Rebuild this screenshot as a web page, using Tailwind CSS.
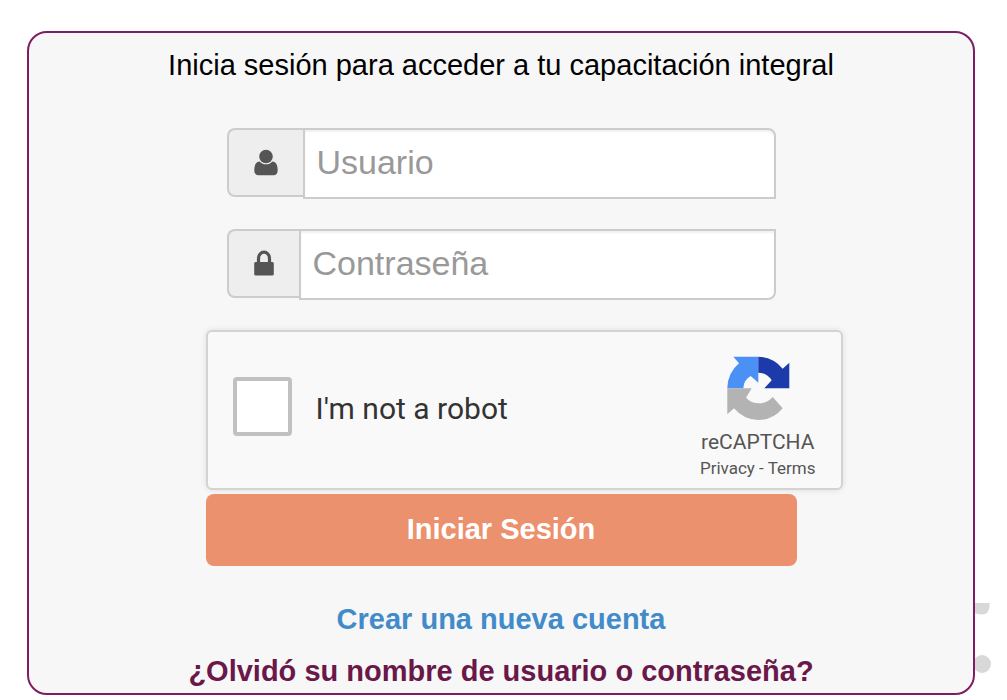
<!DOCTYPE html>
<html lang="es">
<head>
    <meta charset="UTF-8">
    <meta name="viewport" content="width=device-width, initial-scale=1.0">
    <title>Iniciar Sesión</title>
    <script src="https://cdn.jsdelivr.net/npm/@tailwindcss/browser@4"></script>
</head>
<body class="bg-white pt-[31px] pb-[6px] pl-[27px] pr-8 font-['Liberation_Sans',Arial,sans-serif]">
    <div class="relative">
        <!-- Puntos decorativos detrás de la tarjeta -->
        <svg class="absolute -right-5 bottom-5 w-10 h-[72px]" viewBox="0 0 40 72" fill="#d8d8d8" aria-hidden="true">
            <path d="M14 0H34.500V4Q33.500 11.500 27 11.500Q22 11.500 14 8z"/>
            <circle cx="27" cy="61" r="9"/>
        </svg>

        <main class="relative bg-[#f7f7f7] border-2 border-[#7d1d62] rounded-[20px] pt-[14px] pb-1 text-center">
            <h1 class="text-[29px] leading-9 text-black">Inicia sesión para acceder a tu capacitación integral</h1>

            <form class="w-[591px] mx-auto mt-[45px]" onsubmit="return false">
                <div class="px-[21px] space-y-[30px]">
                    <div class="flex items-start">
                        <label for="usuario" aria-label="Usuario" class="w-[76px] h-[69px] flex items-center justify-center bg-[#eee] border-2 border-r-0 border-[#ccc] rounded-l-lg">
                            <svg class="w-6 h-7" viewBox="0 0 24 28" fill="#555" aria-hidden="true">
                                <circle cx="12" cy="7.5" r="6.8"/>
                                <path d="M5.500 12.500C2 12.800.3 16 .3 21.500C.3 24.500 2 26.200 4.500 26.200H19.500C22 26.200 23.700 24.500 23.700 21.500C23.700 16 22 12.800 18.500 12.500C16.500 14.700 14.500 15.300 12 15.300S7.500 14.700 5.500 12.500z"/>
                            </svg>
                        </label>
                        <input id="usuario" type="text" placeholder="Usuario" class="flex-1 min-w-0 h-[71px] px-3 pb-0.5 bg-white border-2 border-[#ccc] rounded-tr-lg text-[34px] text-[#555] placeholder:text-[#999] shadow-[inset_0_2px_2px_rgba(0,0,0,0.06)]">
                    </div>
                    <div class="flex items-start">
                        <label for="clave" aria-label="Contraseña" class="w-[72px] h-[69px] flex items-center justify-center bg-[#eee] border-2 border-r-0 border-[#ccc] rounded-l-lg">
                            <svg class="w-5 h-7" viewBox="0 0 20 28" fill="#555" aria-hidden="true">
                                <path d="M4.500 13V8.500a5.500 6.300 0 0 1 11 0V13" fill="none" stroke="#555" stroke-width="3.200"/>
                                <rect x=".2" y="12" width="19.600" height="13.500" rx="1.500"/>
                            </svg>
                        </label>
                        <input id="clave" type="password" placeholder="Contraseña" class="flex-1 min-w-0 h-[71px] px-3 pb-0.5 bg-white border-2 border-[#ccc] rounded-br-lg text-[34px] text-[#555] placeholder:text-[#999] shadow-[inset_0_2px_2px_rgba(0,0,0,0.06)]">
                    </div>
                </div>

                <div class="w-[637px] h-40 mt-[30px] px-[25px] flex items-center bg-[#f9f9f9] border-2 border-[#d3d3d3] rounded-md shadow-[0_0_6px_rgba(0,0,0,0.1)] font-[Roboto,sans-serif]">
                    <input id="robot" type="checkbox" class="appearance-none w-[59px] h-[59px] mb-2 bg-white border-4 border-[#c1c1c1] rounded-[4px]">
                    <label for="robot" class="ml-6 mb-1 text-[30px] text-[#333]">I'm not a robot</label>
                    <div class="ml-auto flex flex-col items-center text-[#555]">
                        <svg class="w-16 h-16 mt-4" viewBox="0 0 64 64" aria-hidden="true">
                            <path fill="#4a90f5" d="M7.300.7H32.300V26.700L24.700 20Q17.500 24 17.300 32.300H1.300Q1.500 17 13 7.300z"/>
                            <path fill="#1c3aa9" d="M32.300.7Q47 1 56.700 12.700L63.300 6.700V32.300H38.300L45.700 24.300Q40.500 16.700 32.300 16.700z"/>
                            <path fill="#b3b3b3" d="M1.300 32.300H25.700L20 41.700Q25 47.300 33 47.300Q41.500 47.300 46.700 41L56.700 52.300Q47 64 32.300 64Q18 64 8 52.300L1.300 58.300z"/>
                        </svg>
                        <span class="mt-2 text-[21px] leading-7">reCAPTCHA</span>
                        <span class="text-[17px] leading-6"><a href="#">Privacy</a> - <a href="#">Terms</a></span>
                    </div>
                </div>

                <button type="submit" class="block w-full h-[72px] mt-1 bg-[#ec916d] rounded-lg text-white text-[29px] font-bold">Iniciar Sesión</button>
            </form>

            <p class="mt-[35px] text-[29px] leading-9 font-bold"><a href="#" class="text-[#428bca]">Crear una nueva cuenta</a></p>
            <p class="mt-4 text-[29px] leading-9 font-bold"><a href="#" class="text-[#6a1749]">¿Olvidó su nombre de usuario o contraseña?</a></p>
        </main>
    </div>
</body>
</html>
